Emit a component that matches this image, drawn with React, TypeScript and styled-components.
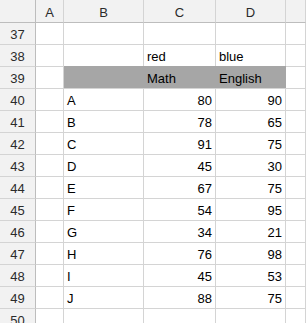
import React from 'react'
import styled, { createGlobalStyle } from 'styled-components'

const GlobalStyle = createGlobalStyle`
  html, body {
    margin: 0;
    padding: 0;
    background: #ffffff;
  }
  body {
    font-family: "Liberation Sans", Arial, sans-serif;
    font-size: 13px;
    color: #000000;
  }
`

const COLS = [36, 28, 80, 72, 70]

const Sheet = styled.div`
  width: 306px;
  height: 323px;
  overflow: hidden;
  background: #ffffff;
`

const Row = styled.div`
  display: grid;
  grid-template-columns: ${COLS.map((w) => `${w}px`).join(' ')} 1fr;
  height: 22px;
  box-sizing: border-box;
`

const HeadCell = styled.div<{ $corner?: boolean }>`
  display: flex;
  align-items: center;
  justify-content: center;
  background: #f2f2f2;
  color: #2b2b2b;
  border-right: 1px solid ${(p) => (p.$corner ? '#bdbdbd' : '#d4d4d4')};
  box-sizing: border-box;
  padding-top: 2px;
`

const RowHead = styled.div<{ $first?: boolean }>`
  display: flex;
  align-items: center;
  justify-content: center;
  background: #f2f2f2;
  color: #2b2b2b;
  border-right: 1px solid #bdbdbd;
  border-top: 1px solid ${(p) => (p.$first ? '#bdbdbd' : '#d4d4d4')};
  box-sizing: border-box;
  padding-top: 1px;
`

const Cell = styled.div<{ $fill?: boolean; $num?: boolean; $first?: boolean }>`
  display: flex;
  align-items: center;
  justify-content: ${(p) => (p.$num ? 'flex-end' : 'flex-start')};
  padding: 1px 3px 0 3px;
  background: ${(p) => (p.$fill ? '#a6a6a6' : '#ffffff')};
  border-right: 1px solid ${(p) => (p.$fill ? '#a6a6a6' : '#d4d4d4')};
  border-top: 1px solid
    ${(p) => (p.$fill ? '#a6a6a6' : p.$first ? '#bdbdbd' : '#d4d4d4')};
  box-sizing: border-box;
  white-space: nowrap;
  overflow: hidden;
`

type Line = { n: number; b?: string; c?: string; d?: string; fill?: boolean; num?: boolean }

const data: [string, number, number][] = [
  ['A', 80, 90],
  ['B', 78, 65],
  ['C', 91, 75],
  ['D', 45, 30],
  ['E', 67, 75],
  ['F', 54, 95],
  ['G', 34, 21],
  ['H', 76, 98],
  ['I', 45, 53],
  ['J', 88, 75],
]

const lines: Line[] = [
  { n: 37 },
  { n: 38, c: 'red', d: 'blue' },
  { n: 39, c: 'Math', d: 'English', fill: true },
  ...data.map(([name, math, eng], i) => ({
    n: 40 + i,
    b: name,
    c: String(math),
    d: String(eng),
    num: true,
  })),
  { n: 50 },
]

export default function App() {
  return (
    <Sheet>
      <GlobalStyle />
      <Row>
        <HeadCell $corner />
        <HeadCell>A</HeadCell>
        <HeadCell>B</HeadCell>
        <HeadCell>C</HeadCell>
        <HeadCell>D</HeadCell>
        <HeadCell />
      </Row>
      {lines.map((l, i) => {
        const first = i === 0
        return (
          <Row key={l.n}>
            <RowHead $first={first}>{l.n}</RowHead>
            <Cell $first={first} />
            <Cell $first={first} $fill={l.fill}>{l.b}</Cell>
            <Cell $first={first} $fill={l.fill} $num={l.num}>
              {l.c}
            </Cell>
            <Cell $first={first} $fill={l.fill} $num={l.num}>
              {l.d}
            </Cell>
            <Cell $first={first} />
          </Row>
        )
      })}
    </Sheet>
  )
}
